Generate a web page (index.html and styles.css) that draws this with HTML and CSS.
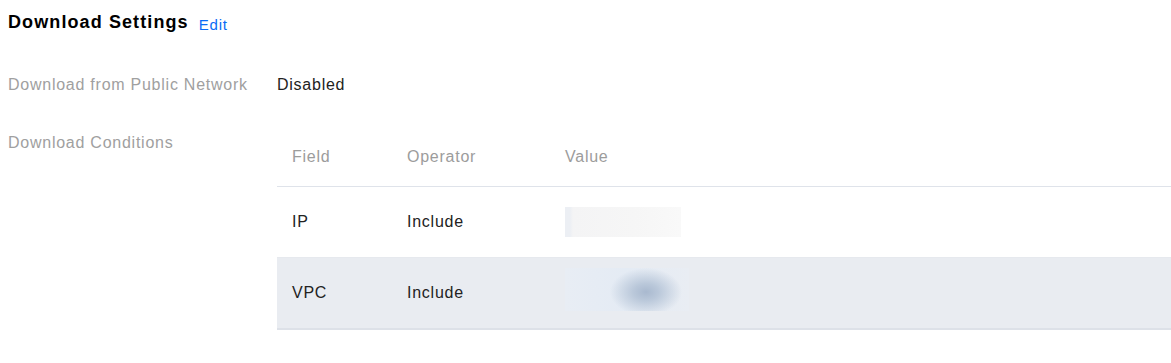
FILE: index.html
```html
<!DOCTYPE html>
<html lang="en">
<head>
    <meta charset="UTF-8">
    <meta name="viewport" content="width=device-width, initial-scale=1.0">
    <title>Download Settings</title>
    <link rel="stylesheet" href="styles.css">
</head>
<body>
    <div class="page">
        <div class="section-head">
            <h2 class="section-title">Download Settings</h2>
            <a class="edit-link" href="#">Edit</a>
        </div>

        <div class="info-list">
            <div class="info-row">
                <div class="info-label">Download from Public Network</div>
                <div class="info-value">Disabled</div>
            </div>
            <div class="info-row">
                <div class="info-label">Download Conditions</div>
                <div class="info-value">
                    <table class="cond-table">
                        <thead>
                            <tr>
                                <th class="col-field">Field</th>
                                <th class="col-op">Operator</th>
                                <th>Value</th>
                            </tr>
                        </thead>
                        <tbody>
                            <tr>
                                <td>IP</td>
                                <td>Include</td>
                                <td><span class="masked masked-ip"></span></td>
                            </tr>
                            <tr class="row-hover">
                                <td>VPC</td>
                                <td>Include</td>
                                <td><span class="masked masked-vpc"></span></td>
                            </tr>
                        </tbody>
                    </table>
                </div>
            </div>
        </div>
    </div>
</body>
</html>
```

FILE: styles.css
```css
body {
    margin: 0;
    padding: 0;
    background: #fff;
    font-family: "Liberation Sans", Arial, sans-serif;
    color: #222;
}

.page {
    padding: 10px 0 0 8px;
}

/* header: title + edit link */
.section-head {
    display: flex;
    align-items: flex-start;
    gap: 10px;
    height: 24px;
}
.section-title {
    margin: 0;
    font-size: 18px;
    line-height: 24px;
    font-weight: bold;
    letter-spacing: 1.1px;
    color: #000;
}
.edit-link {
    margin-top: 5px;
    font-size: 15px;
    line-height: 20px;
    letter-spacing: 0.8px;
    color: #0a6cf5;
    text-decoration: none;
}

/* label / value rows */
.info-list {
    margin-top: 41px;
}
.info-row {
    display: grid;
    grid-template-columns: 269px 1fr;
    margin-bottom: 38px;
    font-size: 16px;
    line-height: 20px;
    letter-spacing: 0.75px;
}
.info-label {
    color: #a0a0a0;
}
.info-value {
    color: #222;
}

/* conditions table */
.cond-table {
    width: 100%;
    border-collapse: collapse;
    font-size: 16px;
    line-height: 20px;
}
.cond-table th {
    text-align: left;
    font-weight: normal;
    color: #9c9c9c;
    padding: 14px 15px 19px;
    border-bottom: 1px solid #dfe3ea;
}
.cond-table th.col-field {
    width: 85px;
}
.cond-table th.col-op {
    width: 128px;
}
.cond-table td {
    height: 71px;
    box-sizing: border-box;
    padding: 0 15px;
    vertical-align: middle;
    border-bottom: 1px solid #e6e9ee;
    color: #222;
}
.cond-table tr:last-child td {
    border-bottom: 2px solid #dde1e8;
}
.row-hover td {
    background: #e9ecf1;
}

/* blurred-out values */
.masked {
    display: block;
}
.masked-ip {
    width: 116px;
    height: 30px;
    background: linear-gradient(90deg, #eceff4 0, #eceff4 5px, #f4f4f5 8px, #f6f6f6 60%, #f9f9f9 100%);
}
.masked-vpc {
    width: 124px;
    height: 43px;
    margin-top: -6px;
    background:
        radial-gradient(ellipse 36px 24px at 81px 24px, #a9b9cf 0, #bac8da 35%, rgba(229, 236, 245, 0) 100%),
        linear-gradient(90deg, #e8edf4 0, #e4ebf4 50%, #e9edf3 100%);
}
```
